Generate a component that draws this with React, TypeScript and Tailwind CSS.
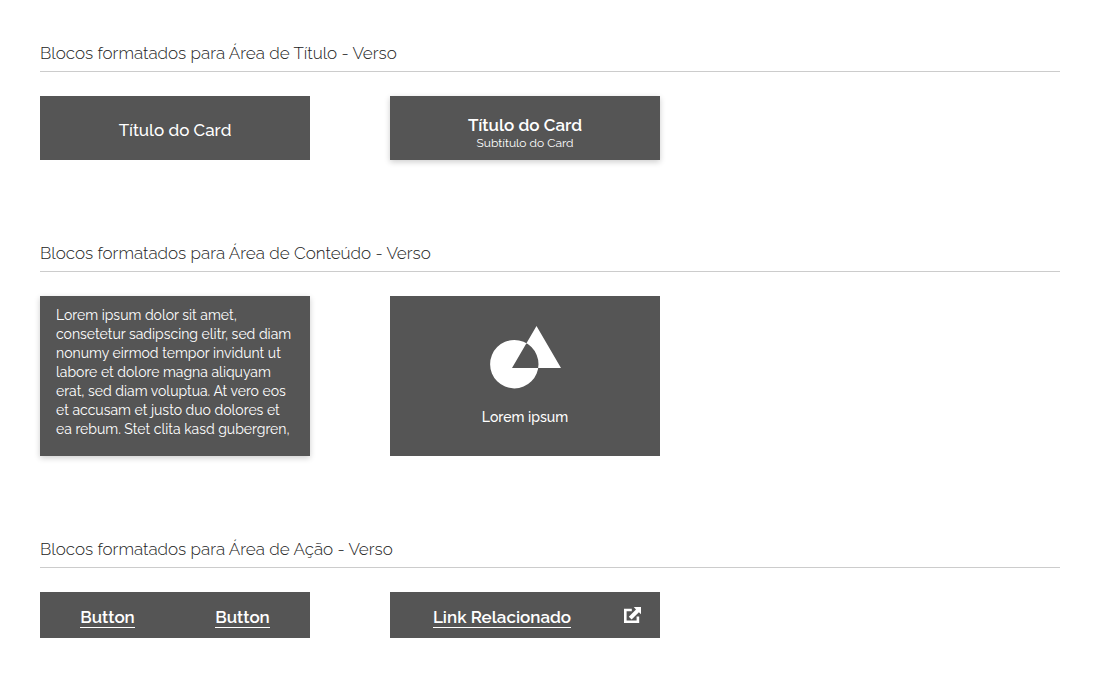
import type { ReactNode } from 'react';

function Section({ title, children }: { title: string; children: ReactNode }) {
  return (
    <section>
      <h2 className="border-b border-[#cccccc] pb-2 text-[17px] leading-5 font-light text-[#222222]">{title}</h2>
      <div className="mt-6 flex flex-wrap gap-20">{children}</div>
    </section>
  );
}

function ShapesIcon() {
  return (
    <svg width="70" height="64" viewBox="0 0 70 64" fill="white" fillRule="evenodd" className="overflow-visible" aria-hidden="true">
      <path d="M24.3 14a24.2 24.2 0 1 0 0 48.4a24.2 24.2 0 1 0 0-48.4ZM46.5 0L71 42H22Z" />
    </svg>
  );
}

function ExternalLinkIcon() {
  return (
    <svg width="18" height="17" viewBox="0 0 18 17" fill="white" aria-hidden="true">
      <path d="M0 1.7H7.8V4.2H2.6V13.6H12.6V9.5H15.2V16H0Z" />
      <path d="M9.8 0H17V7.2L14.9 5.2L7.6 12.5L4.8 9.7L12 2.4Z" />
    </svg>
  );
}

const action = 'border-b border-white text-[17px] leading-5 font-semibold text-white';

export default function App() {
  return (
    <main className="flex flex-col gap-[83px] bg-white px-10 pt-[43px] pb-10 font-['Raleway','Lato',sans-serif]">
      <Section title="Blocos formatados para Área de Título - Verso">
        <div className="flex h-16 w-[270px] items-center justify-center bg-[#555555] pt-1">
          <h3 className="text-[17px] leading-5 font-medium text-white">Título do Card</h3>
        </div>
        <div className="flex h-16 w-[270px] flex-col items-center justify-end bg-[#555555] pb-[9px] shadow-[0_2px_6px_rgba(0,0,0,0.2)]">
          <h3 className="text-[17px] leading-5 font-semibold text-white">Título do Card</h3>
          <p className="text-xs leading-4 text-white">Subtítulo do Card</p>
        </div>
      </Section>
      <Section title="Blocos formatados para Área de Conteúdo - Verso">
        <div className="h-40 w-[270px] bg-[#555555] px-4 pt-[10px] shadow-[0_2px_6px_rgba(0,0,0,0.2)]">
          <p className="text-sm leading-[19px] text-white">
            Lorem ipsum dolor sit amet,<br />
            consetetur sadipscing elitr, sed diam<br />
            nonumy eirmod tempor invidunt ut<br />
            labore et dolore magna aliquyam<br />
            erat, sed diam voluptua. At vero eos<br />
            et accusam et justo duo dolores et<br />
            ea rebum. Stet clita kasd gubergren,
          </p>
        </div>
        <div className="flex h-40 w-[270px] flex-col items-center gap-[17px] bg-[#555555] pt-[30px]">
          <ShapesIcon />
          <p className="text-sm leading-5 font-medium text-white">Lorem ipsum</p>
        </div>
      </Section>
      <Section title="Blocos formatados para Área de Ação - Verso">
        <div className="flex h-[46px] w-[270px] items-center justify-around bg-[#555555] pt-[5px]">
          <button type="button" className={action}>Button</button>
          <button type="button" className={action}>Button</button>
        </div>
        <div className="flex h-[46px] w-[270px] items-center gap-[10px] bg-[#555555] pr-[18px]">
          <div className="flex flex-1 justify-center pt-[5px]">
            <a href="#relacionado" className={action}>Link Relacionado</a>
          </div>
          <a href="#relacionado" aria-label="Abrir link relacionado">
            <ExternalLinkIcon />
          </a>
        </div>
      </Section>
    </main>
  );
}
